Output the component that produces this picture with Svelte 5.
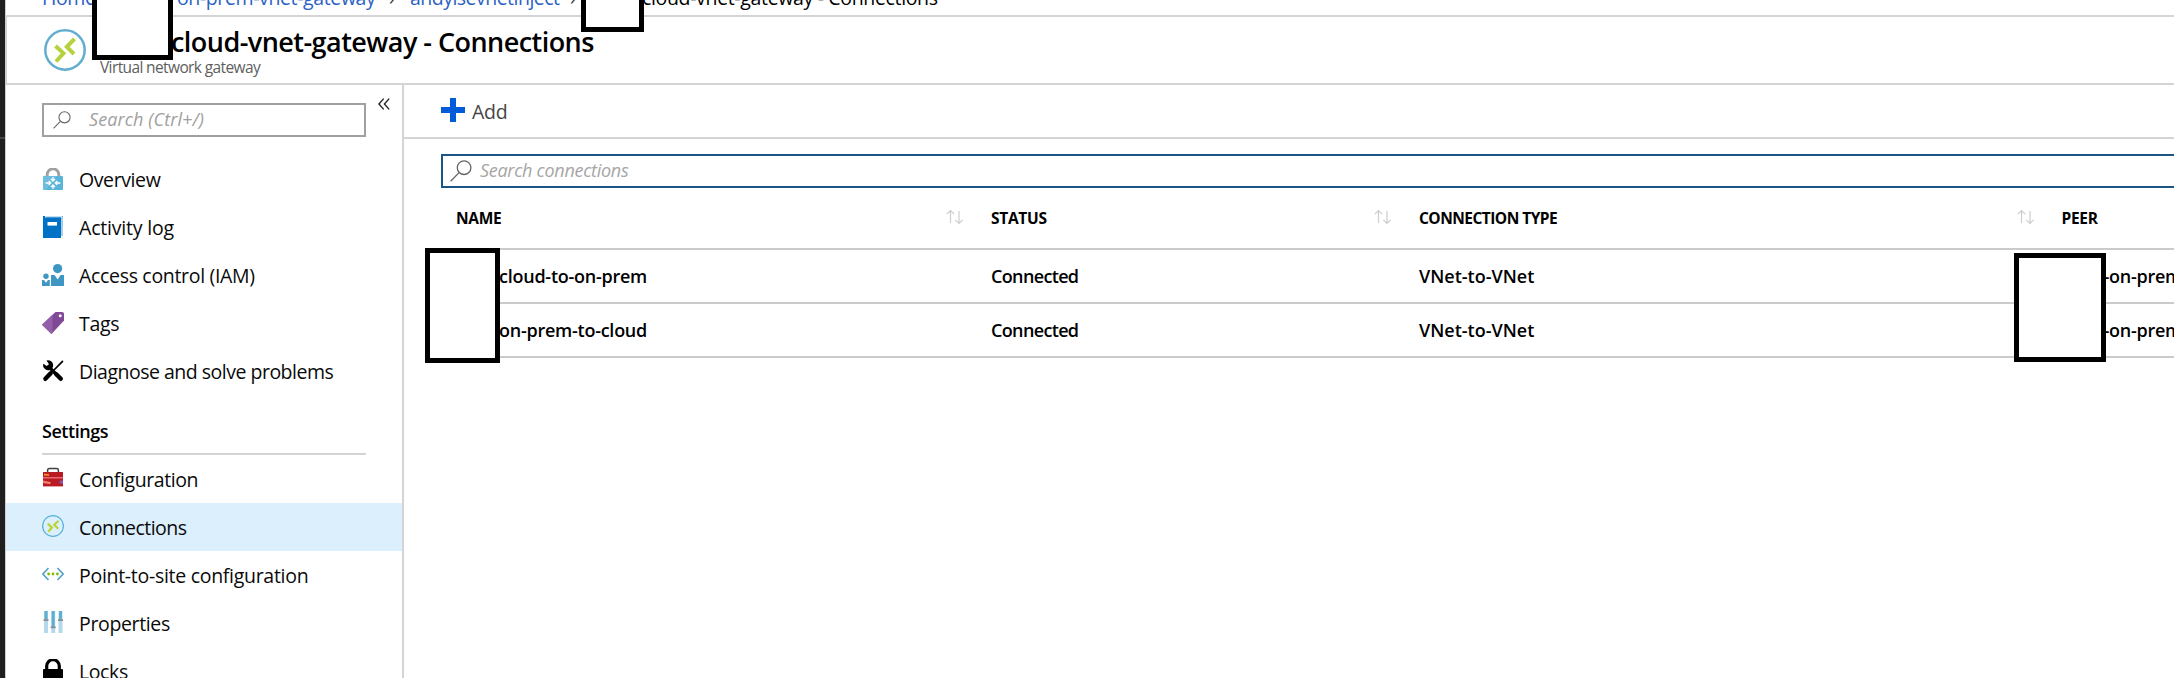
<script>
  const general = [
    { icon: 'vpn', label: 'Overview', ls: -0.4 },
    { icon: 'log', label: 'Activity log', ls: -0.2 },
    { icon: 'iam', label: 'Access control (IAM)', ls: -0.32 },
    { icon: 'tag', label: 'Tags', ls: -0.3 },
    { icon: 'tools', label: 'Diagnose and solve problems', ls: -0.5 }
  ];
  const settings = [
    { icon: 'toolbox', label: 'Configuration', ls: -0.4 },
    { icon: 'conn', label: 'Connections', ls: -0.5, active: true },
    { icon: 'p2s', label: 'Point-to-site configuration', ls: -0.29 },
    { icon: 'props', label: 'Properties', ls: -0.35 },
    { icon: 'lock', label: 'Locks', ls: -0.4 }
  ];
  const rows = [
    { name: 'cloud-to-on-prem', status: 'Connected', type: 'VNet-to-VNet', peer: '-on-prem-vnet-gateway' },
    { name: 'on-prem-to-cloud', status: 'Connected', type: 'VNet-to-VNet', peer: '-on-prem-vnet-gateway' }
  ];
  const columns = ['NAME', 'STATUS', 'CONNECTION TYPE'];
</script>

{#snippet icon(name)}
  <svg class="icon" viewBox="0 0 22 22">
    {#if name === 'vpn'}
      <path d="M5.2 9V6.6a5.8 5.8 0 0 1 11.6 0V9" fill="none" stroke="#a0a0a0" stroke-width="2.9" />
      <rect x="1" y="8" width="20" height="14" rx="1" fill="#59b4d9" />
      <path d="M1 9q0-1 1-1h13L4 22H2q-1 0-1-1z" fill="#7cc3e1" opacity=".6" />
      <g fill="none" stroke="#fff" stroke-width="1.3">
        <path d="M11 9v4M9 11l2 2 2-2M11 21v-4M9 19l2-2 2 2M3.600 15h5M6.700 13l2 2-2 2M18.400 15h-5M15.300 13l-2 2 2 2" />
      </g>
    {:else if name === 'log'}
      <path d="M3 0h18v20h-2z" fill="#5ca6dc" />
      <path d="M2.5 .8H20V20" fill="none" stroke="#fff" stroke-width=".9" />
      <path d="M1 0h2v1.6h16V22H1z" fill="#0072c6" />
      <rect x="5.5" y="6" width="9.5" height="3.6" fill="#fff" />
    {:else if name === 'iam'}
      <g fill="#3e97c3">
        <circle cx="15.6" cy="4.6" r="4.6" />
        <path d="M9 11h3.6l3 4.5 3-4.5h4.2v11H9z" />
        <circle cx="4" cy="12.3" r="2.7" />
        <path d="M0 16h2l2 2.8L6 16h1.8v6H0z" />
      </g>
    {:else if name === 'tag'}
      <path d="M13.500 0h6.500q2 0 2 2v6.500L9.500 22 0 12.800z" fill="#804998" />
      <path d="M10.500 2.700V21L9.500 22 0 12.800z" fill="#925fa8" />
      <circle cx="18.2" cy="3.8" r="1.5" fill="#fff" />
    {:else if name === 'tools'}
      <g fill="none" stroke="#000" stroke-linecap="round">
        <path d="M20.5 1.3 12 10" stroke-width="1.7" />
        <path d="M8.7 13.3 3.4 18.8" stroke-width="4.4" />
        <path d="M7.5 7.5 13 13" stroke-width="3.2" />
        <path d="M14 14l4.8 4.8" stroke-width="4.4" />
      </g>
      <path d="M4.5 .6A5 5 0 1 1 1.4 3.8L4.6 6 7 4.2z" fill="#000" />
    {:else if name === 'toolbox'}
      <path d="M5.6 5.5V3.3q0-1.700 1.700-1.700h7.400q1.700 0 1.700 1.700v2.200" fill="none" stroke="#404040" stroke-width="1.5" />
      <rect x="1" y="5" width="20" height="14.4" fill="#b81b24" />
      <path d="M1 10h20v1.500H1z" fill="#e86a70" />
      <path d="M2 6.8 7 7v1.700H2z" fill="#f08a2c" />
      <path d="M1 13.600 9 15.300l-1 2L1 16z" fill="#f2816a" />
      <rect x="17.600" y="13.600" width="3.400" height="3" fill="#8a55b8" />
    {:else if name === 'conn'}
      <circle cx="11" cy="11" r="10.400" fill="none" stroke="#59b4d9" stroke-width="1.300" />
      <path d="M5.700 8.600 10 12.600 6.200 16.700M16.500 5.700 12.200 9.700l4 4" fill="none" stroke="#b8d432" stroke-width="2.200" />
    {:else if name === 'p2s'}
      <path d="M6.500 5 .9 11l5.600 6M15.500 5l5.600 6-5.600 6" fill="none" stroke="#4c9fca" stroke-width="1.500" />
      <g fill="#7fba00"><circle cx="6.600" cy="11" r="1.400" /><circle cx="11" cy="11" r="1.400" /><circle cx="15.400" cy="11" r="1.400" /></g>
    {:else if name === 'props'}
      <g fill="#b3d9ea"><path d="M2 0h4v22H2zM9.200 0h4v22h-4zM16.500 0h4v22h-4z" /></g>
      <g fill="#5fb0d0"><path d="M2.500 0h3v8.500h-3zM9.700 0h3v16h-3zM17 0h3v8.500h-3z" /></g>
      <g fill="#8c8c8c"><path d="M1.500 8.200h5v1.700h-5zM8.700 15.500h5v1.700h-5zM16 8.200h5v1.700h-5z" /></g>
    {:else if name === 'lock'}
      <path d="M4.700 11V7a6.300 6.300 0 0 1 12.600 0v4" fill="none" stroke="#000" stroke-width="3.200" />
      <rect x="1" y="10" width="20" height="13" rx="1" />
    {/if}
  </svg>
{/snippet}

{#snippet nav(item)}
  <a class="item" class:active={item.active}>
    {@render icon(item.icon)}
    <span style:letter-spacing="{item.ls}px">{item.label}</span>
  </a>
{/snippet}

{#snippet magnifier(size)}
  <svg width={size} height={size} viewBox="0 0 20 20" fill="none" stroke="#666" stroke-width="1.200">
    <circle cx="12.800" cy="7" r="6.200" /><path d="M8.200 11.500.6 19.300" />
  </svg>
{/snippet}

<div class="page">
  <div class="rail"></div>
  <div class="blade">
    <nav class="crumbs">
      <a class="home">Home</a>
      <a class="c1">on-prem-vnet-gateway</a><i>›</i>
      <a class="c2">andyisevnetinject</a><i>›</i>
      <span class="c3">cloud-vnet-gateway - Connections</span>
    </nav>
    <header>
      <svg class="logo" viewBox="0 0 42 42">
        <circle cx="21" cy="21" r="19.700" fill="none" stroke="#62aecf" stroke-width="2.500" />
        <path d="M11.500 17 19.500 24.300 12 32.500M30.500 9.800 22.800 17.800 30 25" fill="none" stroke="#b5d13c" stroke-width="4" />
      </svg>
      <div class="titles">
        <h1>cloud-vnet-gateway - Connections</h1>
        <p>Virtual network gateway</p>
      </div>
    </header>
    <div class="body">
      <aside>
        <div class="finder">
          <div class="search">{@render magnifier(18)}<span>Search (Ctrl+/)</span></div>
          <svg class="collapse" viewBox="0 0 12 12" fill="none" stroke="#222" stroke-width="1.400"><path d="M5.700.6.900 6l4.800 5.400M11.200.6 6.400 6l4.800 5.400" /></svg>
        </div>
        <div class="general">{#each general as item}{@render nav(item)}{/each}</div>
        <h2>Settings</h2>
        {#each settings as item}{@render nav(item)}{/each}
      </aside>
      <main>
        <div class="toolbar">
          <svg width="24" height="24" viewBox="0 0 24 24"><path d="M9 0h6v9h9v6h-9v9H9v-9H0V9h9z" fill="#015cda" /></svg>
          <span>Add</span>
        </div>
        <div class="filter">{@render magnifier(22)}<span>Search connections</span></div>
        <div class="row head">
          {#each columns as col}
            <div class="cell"><span class:wide={col.length > 8}>{col}</span>
              <svg width="18" height="16" viewBox="0 0 18 16" fill="none" stroke="#cdcdcd" stroke-width="1.200"><path d="M4.500 14V1.500M.8 5.200 4.500 1.500l3.700 3.700M13 2v12.500M9.300 10.800l3.700 3.700 3.700-3.700" /></svg>
            </div>
          {/each}
          <div class="cell"><span>PEER</span></div>
        </div>
        {#each rows as row}
          <div class="row">
            <div class="cell name">{row.name}</div>
            <div class="cell status">{row.status}</div>
            <div class="cell">{row.type}</div>
            <div class="cell peer">{row.peer}</div>
          </div>
        {/each}
      </main>
    </div>
  </div>
  <div class="mask m1"></div>
  <div class="mask m2"></div>
  <div class="mask m3"></div>
  <div class="mask m4"></div>
</div>

<style>
  :global(body) { background: #fff; overflow: hidden; }
  .page { position: relative; display: flex; width: 2174px; height: 678px; overflow: hidden; background: #fff; font-family: 'Open Sans', 'Noto Sans', sans-serif; color: #000; }
  .rail { flex: none; width: 5px; background: linear-gradient(#444, #444) 0 137px / 5px 2px no-repeat #1f1f1f; border-right: 1px solid #cfcfcf; }
  .blade { flex: 1; min-width: 0; display: flex; flex-direction: column; }
  .crumbs { height: 15px; flex: none; display: flex; align-items: flex-end; padding-left: 36px; font-size: 19.500px; line-height: 27px; white-space: nowrap; color: #000; }
  .crumbs > * { flex: none; margin-bottom: 4px; letter-spacing: -.38px; }
  .crumbs a { color: #2b62c4; }
  .home { width: 135px; }
  .c1 { width: 212px; }
  .crumbs .c2 { width: 160px; letter-spacing: -.52px; }
  .crumbs i { width: 21px; font-style: normal; color: #333; }
  .crumbs .c3 { margin-left: 51px; letter-spacing: -.34px; }
  header { box-sizing: border-box; flex: none; height: 70px; border: 2px solid #d4d4d4; border-right: 0; border-left-width: 1px; display: flex; padding-left: 37px; }
  .logo { width: 42px; height: 42px; margin-top: 12px; flex: none; }
  .titles { padding-left: 14px; white-space: nowrap; }
  h1 { margin: 7px 0 0 71px; font-weight: 600; font-size: 27px; line-height: 36px; letter-spacing: -.54px; }
  p { margin: -3px 0 0; font-size: 15.500px; line-height: 20px; letter-spacing: -.62px; color: #5e5e5e; }
  .body { flex: 1; min-height: 0; display: flex; }
  aside { box-sizing: border-box; width: 398px; flex: none; border-right: 2px solid #d4d4d4; overflow: hidden; }
  .finder { display: flex; height: 71px; padding-left: 36px; }
  .search { box-sizing: border-box; width: 324px; height: 34px; margin-top: 18px; border: 2px solid #a0a0a0; display: flex; align-items: center; padding-left: 9px; gap: 18px; font-size: 18px; font-style: italic; color: #a0a0a0; letter-spacing: .1px; }
  .search span, .filter span { margin-top: -2px; }
  .collapse { width: 12px; height: 12px; margin: 13px 0 0 12px; }
  .item { display: flex; align-items: center; height: 48px; padding-left: 36px; gap: 15px; font-size: 19.500px; white-space: nowrap; color: #0a0a0a; }
  .general span { margin-top: -2px; }
  .item.active { background: #dceffd; }
  .icon { width: 22px; height: 22px; flex: none; margin-top: -2px; }
  h2 { box-sizing: border-box; height: 59px; margin: 0 36px 0 36px; padding-top: 22px; border-bottom: 2px solid #d4d4d4; font-size: 18px; font-weight: 600; line-height: 26px; letter-spacing: -.45px; }
  main { flex: 1; min-width: 0; overflow: hidden; }
  .toolbar { box-sizing: border-box; height: 54px; border-bottom: 2px solid #d4d4d4; display: flex; align-items: center; padding-left: 37px; gap: 7px; font-size: 19.500px; color: #444; letter-spacing: -.3px; }
  .toolbar svg { margin-top: -2px; }
  .toolbar span { margin-top: 1px; }
  .filter { box-sizing: border-box; margin: 15px 0 0 37px; width: 1800px; height: 34px; border: 2px solid #1b5585; display: flex; align-items: center; padding-left: 7px; gap: 8px; font-size: 18px; font-style: italic; color: #a6a6a6; letter-spacing: -.28px; }
  .row { box-sizing: border-box; height: 54px; border-bottom: 2px solid #cacaca; margin-left: 21px; padding-left: 31px; display: grid; grid-template-columns: 535px 428px 642.500px 400px; font-size: 18px; font-weight: 600; white-space: nowrap; }
  .head { height: 62px; font-size: 15.500px; font-weight: 700; letter-spacing: -.3px; }
  .cell { display: flex; align-items: center; }
  .head .cell { justify-content: space-between; padding: 0 27px 2px 0; }
  .head svg { margin-top: -1px; }
  .head span { margin-top: 1px; }
  .wide { letter-spacing: -.53px; }
  .name { padding-left: 43px; letter-spacing: -.25px; }
  .status { letter-spacing: -.65px; }
  .peer { padding-left: 42px; letter-spacing: -.25px; }
  .mask { box-sizing: border-box; position: absolute; background: #fff; border: 5px solid #000; }
  .m1 { left: 92px; top: -6px; width: 81px; height: 66px; }
  .m2 { left: 581px; top: -6px; width: 63px; height: 38px; }
  .m3 { left: 425px; top: 248px; width: 75px; height: 115px; }
  .m4 { left: 2014px; top: 253px; width: 92px; height: 109px; }
</style>
